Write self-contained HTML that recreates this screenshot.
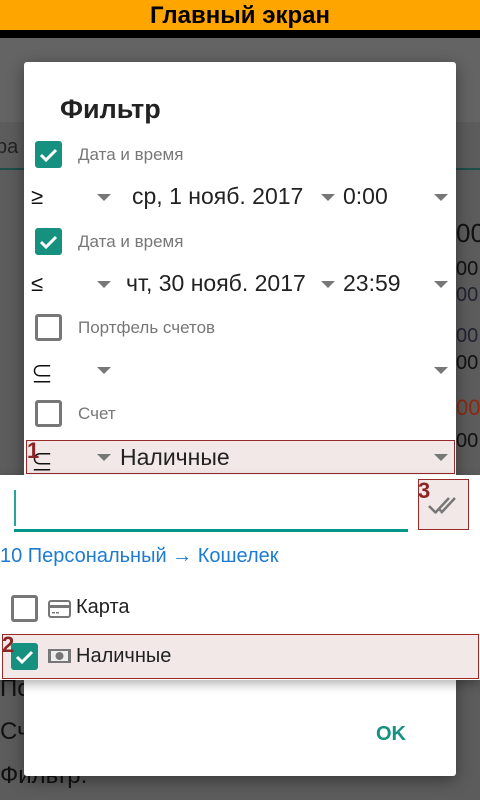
<!DOCTYPE html>
<html><head><meta charset="utf-8"><style>
*{margin:0;padding:0;box-sizing:border-box}
body{width:480px;height:800px;overflow:hidden;position:relative;background:#5c5c5c;font-family:"Liberation Sans","Noto Sans CJK SC",sans-serif}
.a{position:absolute}
.top{left:0;top:0;width:480px;height:30px;background:#ffa500;text-align:center;font-weight:bold;font-size:24px;line-height:32px;color:#000}
.cb{width:27px;height:27px;border-radius:3px}
.on{background:#16917f}
.off{border:3px solid #777;border-radius:3px}
.lbl{font-size:17px;color:#777}
.dd{font-size:23px;color:#222}
.tri{width:0;height:0;border-left:7px solid transparent;border-right:7px solid transparent;border-top:7px solid #777}
.sym{font-size:22px;color:#111}
</style></head><body>
<div class="a top">Главный экран</div>
<div class="a" style="left:0;top:30px;width:480px;height:8px;background:#000"></div>
<div class="a" style="left:0;top:38px;width:480px;height:84px;background:#646464"></div>
<div class="a" style="left:0;top:168px;width:480px;height:2px;background:#1d4e48"></div>
<div class="a" style="left:-4px;top:136px;font-size:20px;color:#222">pa</div>
<div class="a" style="left:456px;top:218px;font-size:26px;color:#111">00</div>
<div class="a" style="left:456px;top:258px;font-size:20px;color:#111">00</div>
<div class="a" style="left:456px;top:284px;font-size:20px;color:#223">00</div>
<div class="a" style="left:456px;top:325px;font-size:20px;color:#223">00</div>
<div class="a" style="left:456px;top:352px;font-size:20px;color:#111">00</div>
<div class="a" style="left:456px;top:395px;font-size:22px;color:#8a2a10">00</div>
<div class="a" style="left:456px;top:430px;font-size:20px;color:#111">00</div>
<div class="a" style="left:0;top:675px;font-size:24px;color:#111">По</div>
<div class="a" style="left:0;top:718px;font-size:24px;color:#111">Сч</div>
<div class="a" style="left:0;top:762px;font-size:24px;color:#111">Фильтр.</div>

<div class="a" style="left:24px;top:62px;width:432px;height:714px;background:#fff;border-radius:3px;box-shadow:0 4px 16px rgba(0,0,0,.4)"></div>
<div class="a" style="left:60px;top:94px;font-size:27px;font-weight:bold;color:#222">Фильтр</div>

<div class="a cb on" style="left:35px;top:141px"><svg width="27" height="27"><path d="M6 14l5 5 10-10" stroke="#fff" stroke-width="3" fill="none"/></svg></div>
<div class="a lbl" style="left:78px;top:145px">Дата и время</div>
<div class="a sym" style="left:31px;top:184px">≥</div>
<div class="a tri" style="left:97px;top:194px"></div>
<div class="a dd" style="left:132px;top:183px">ср, 1 нояб. 2017</div>
<div class="a tri" style="left:321px;top:194px"></div>
<div class="a dd" style="left:343px;top:183px">0:00</div>
<div class="a tri" style="left:434px;top:194px"></div>

<div class="a cb on" style="left:35px;top:228px"><svg width="27" height="27"><path d="M6 14l5 5 10-10" stroke="#fff" stroke-width="3" fill="none"/></svg></div>
<div class="a lbl" style="left:78px;top:232px">Дата и время</div>
<div class="a sym" style="left:31px;top:271px">≤</div>
<div class="a tri" style="left:97px;top:281px"></div>
<div class="a dd" style="left:126px;top:270px">чт, 30 нояб. 2017</div>
<div class="a tri" style="left:321px;top:281px"></div>
<div class="a dd" style="left:343px;top:270px">23:59</div>
<div class="a tri" style="left:434px;top:281px"></div>

<div class="a cb off" style="left:35px;top:314px"></div>
<div class="a lbl" style="left:78px;top:318px">Портфель счетов</div>
<div class="a sym" style="left:31px;top:357px">⊆</div>
<div class="a tri" style="left:97px;top:367px"></div>
<div class="a tri" style="left:434px;top:367px"></div>

<div class="a cb off" style="left:35px;top:400px"></div>
<div class="a lbl" style="left:78px;top:404px">Счет</div>
<div class="a" style="left:26px;top:440px;width:429px;height:34px;background:#f3e8e8;border:1px solid #9a2a2a"></div>
<div class="a sym" style="left:31px;top:445px">⊆</div>
<div class="a" style="left:27px;top:438px;font-size:22px;font-weight:bold;color:#8b2525">1</div>
<div class="a tri" style="left:97px;top:454px"></div>
<div class="a dd" style="left:120px;top:444px">Наличные</div>
<div class="a tri" style="left:434px;top:454px"></div>

<div class="a" style="left:0;top:475px;width:480px;height:205px;background:#fff;box-shadow:0 4px 10px rgba(0,0,0,.3)"></div>
<div class="a" style="left:14px;top:490px;width:2px;height:36px;background:#26a69a"></div>
<div class="a" style="left:14px;top:529px;width:394px;height:3px;background:#009688"></div>
<div class="a" style="left:418px;top:479px;width:51px;height:51px;background:#f3e8e8;border:1px solid #9a2a2a"></div>
<div class="a" style="left:418px;top:478px;font-size:22px;font-weight:bold;color:#8b2525">3</div>
<svg class="a" style="left:425px;top:492px" width="40" height="30"><path d="M4 14l7 7M10 21l14-15M16 21l14-15M13 16l3 3" stroke="#777" stroke-width="2.5" fill="none"/></svg>
<div class="a" style="left:0;top:545px;font-size:20px;color:#1e7bd4">10 Персональный → Кошелек</div>
<div class="a cb off" style="left:11px;top:595px"></div>
<svg class="a" style="left:48px;top:600px" width="23" height="18"><rect x="1" y="1" width="21" height="16" rx="2" fill="none" stroke="#777" stroke-width="2"/><rect x="1" y="5" width="21" height="3" fill="#777"/><rect x="4" y="12" width="3" height="1.5" fill="#777"/><rect x="8" y="12" width="3" height="1.5" fill="#777"/></svg>
<div class="a" style="left:76px;top:596px;font-size:20px;color:#222">Карта</div>
<div class="a" style="left:2px;top:634px;width:477px;height:45px;background:#f3e8e8;border:1px solid #9a2a2a"></div>
<div class="a cb on" style="left:11px;top:643px"><svg width="27" height="27"><path d="M6 14l5 5 10-10" stroke="#fff" stroke-width="3" fill="none"/></svg></div>
<div class="a" style="left:2px;top:632px;font-size:22px;font-weight:bold;color:#8b2525">2</div>
<svg class="a" style="left:48px;top:648px" width="23" height="16"><rect x="0" y="1" width="23" height="14" fill="#777"/><rect x="3" y="3" width="17" height="10" fill="#eee"/><circle cx="11.5" cy="8" r="4" fill="#777"/></svg>
<div class="a" style="left:76px;top:645px;font-size:20px;color:#222">Наличные</div>

<div class="a" style="left:376px;top:723px;font-size:20px;font-weight:bold;color:#16917f">OK</div>
</body></html>
